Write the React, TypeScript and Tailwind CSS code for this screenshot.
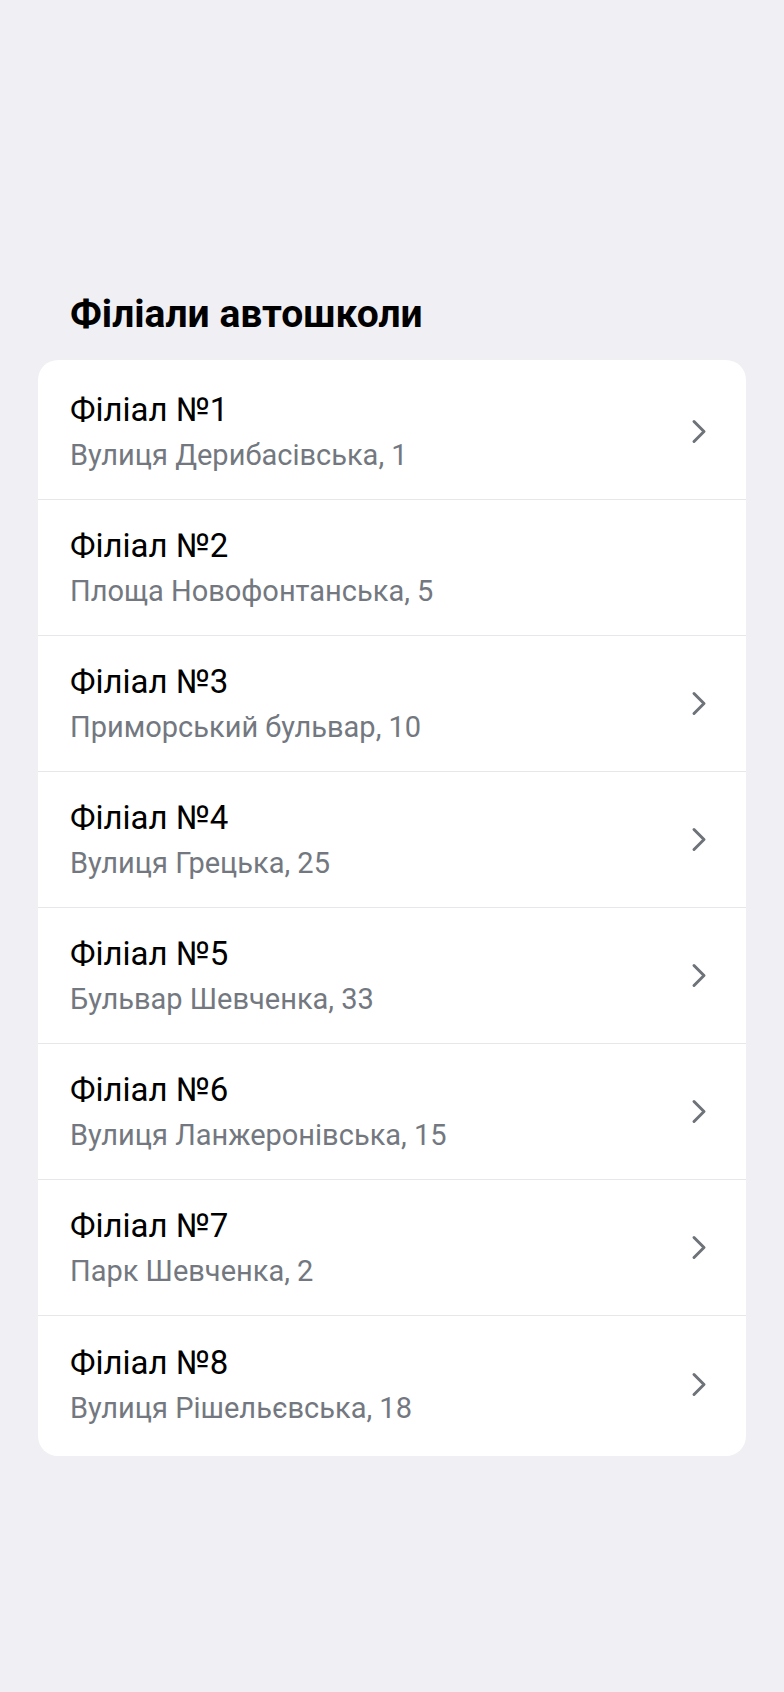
import React from 'react';

interface Branch {
  id: number;
  name: string;
  address: string;
  hasLink: boolean;
}

const branches: Branch[] = [
  { id: 1, name: 'Філіал №1', address: 'Вулиця Дерибасівська, 1', hasLink: true },
  { id: 2, name: 'Філіал №2', address: 'Площа Новофонтанська, 5', hasLink: false },
  { id: 3, name: 'Філіал №3', address: 'Приморський бульвар, 10', hasLink: true },
  { id: 4, name: 'Філіал №4', address: 'Вулиця Грецька, 25', hasLink: true },
  { id: 5, name: 'Філіал №5', address: 'Бульвар Шевченка, 33', hasLink: true },
  { id: 6, name: 'Філіал №6', address: 'Вулиця Ланжеронівська, 15', hasLink: true },
  { id: 7, name: 'Філіал №7', address: 'Парк Шевченка, 2', hasLink: true },
  { id: 8, name: 'Філіал №8', address: 'Вулиця Рішельєвська, 18', hasLink: true },
];

const Chevron: React.FC = () => (
  <svg width="18" height="27" viewBox="0 0 18 27" fill="none" className="text-[#6e737a]">
    <path d="M4 3.5 L14 13.5 L4 23.5" stroke="currentColor" strokeWidth="3" strokeLinecap="round" strokeLinejoin="round" />
  </svg>
);

const App: React.FC = () => {
  return (
    <div className="min-h-screen bg-[#efeff4] font-['Roboto',sans-serif] pt-[291px]">
      <h1 className="px-[70px] text-[39px] leading-[46px] font-bold text-black mb-[23px]">Філіали автошколи</h1>

      <div className="mx-[38px] bg-white rounded-[20px] py-1">
        {branches.map((b, i) => (
          <div
            key={b.id}
            className={`flex items-center justify-between h-[136px] pl-8 pr-[38px] ${
              i < branches.length - 1 ? 'border-b border-[#e6e6eb]' : ''
            }`}
          >
            <div className="flex flex-col">
              <span className="text-[33px] leading-[38px] text-black">{b.name}</span>
              <span className="mt-[9px] text-[29px] leading-[34px] text-[#737880]">{b.address}</span>
            </div>
            {b.hasLink && <Chevron />}
          </div>
        ))}
      </div>
    </div>
  );
};

export default App;
